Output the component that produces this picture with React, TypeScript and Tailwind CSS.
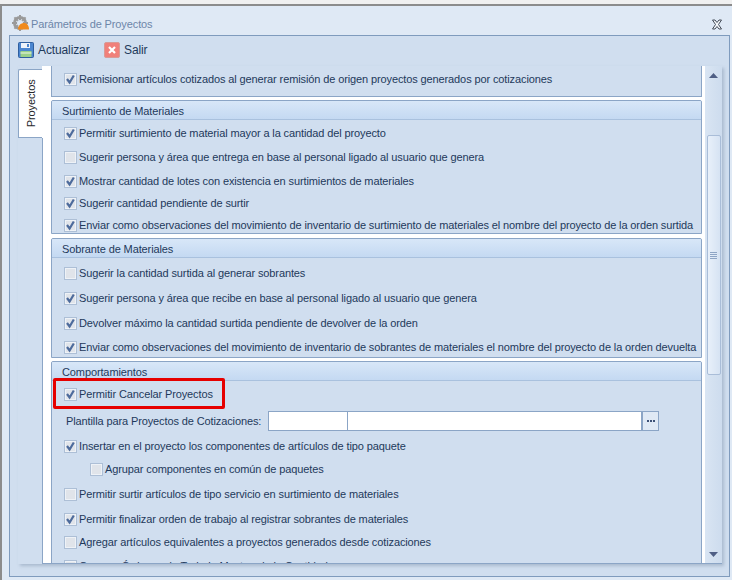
import React from 'react';

const font = { fontFamily: '"Liberation Sans", sans-serif' };

const Check = ({ on, indent }: { on?: boolean; indent?: boolean }) => (
  <span className={`flex h-[13px] w-[13px] shrink-0 items-center justify-center border border-[#adbfd6] bg-[#e0e4ea] shadow-[inset_0_0_0_1px_#eef2f7] ${indent ? 'ml-[26px]' : ''}`}>
    {on && (
      <svg width="11" height="11" viewBox="0 0 11 11">
        <path d="M2 5 L4.6 8.5 L8.8 1.5" fill="none" stroke="#4d6b9c" strokeWidth="2.2" />
      </svg>
    )}
  </span>
);

const Row = ({ text, on, h, indent }: { text: string; on?: boolean; h: string; indent?: boolean }) => (
  <div className={`flex shrink-0 items-center gap-[2px] whitespace-nowrap pl-[12px] ${h}`}>
    <Check on={on} indent={indent} />
    <span>{text}</span>
  </div>
);

const Group = ({ title, h, children }: { title: string; h: string; children: React.ReactNode }) => (
  <div className={`flex shrink-0 flex-col overflow-hidden rounded-t-[2px] border border-[#8ba5c6] bg-[#d0deef] ${h}`}>
    <div className="flex h-[19px] shrink-0 items-center border-b border-[#a9c1de] bg-gradient-to-b from-[#d8e7f8] to-[#c4d9f2] pl-[10px] pt-[2px]">
      {title}
    </div>
    {children}
  </div>
);

const GearIcon = () => (
  <svg width="18" height="18" viewBox="0 0 18 18">
    <circle cx="8" cy="8" r="5.5" fill="none" stroke="#9a9a9a" strokeWidth="3" />
    <path d="M8 0v16M0 8h16M2.4 2.4l11.2 11.2M13.6 2.4L2.4 13.6" stroke="#9a9a9a" strokeWidth="2" />
    <circle cx="8" cy="8" r="3" fill="#dfe9f5" />
    <path d="M6 14.5 C6 10 9.5 8 12 8 C15 8 17 10.5 17 14.5 Z" fill="#f08a1c" />
  </svg>
);

const SaveIcon = () => (
  <svg width="16" height="16" viewBox="0 0 16 16">
    <rect x="0.5" y="0.5" width="15" height="15" rx="1" fill="#4b86d0" stroke="#2f5f9f" />
    <rect x="3" y="1" width="9" height="5" fill="#eef3fa" />
    <rect x="9" y="2" width="2" height="3" fill="#4b86d0" />
    <rect x="2.5" y="9" width="11" height="6" fill="#9bd08a" />
    <rect x="2.5" y="10.5" width="11" height="1" fill="#eef7e8" />
  </svg>
);

const ExitIcon = () => (
  <svg width="16" height="16" viewBox="0 0 16 16">
    <rect x="0.5" y="0.5" width="15" height="15" rx="1.5" fill="#f0807a" stroke="#d99a96" />
    <path d="M5 5l6 6M11 5l-6 6" stroke="#ffffff" strokeWidth="2.2" />
  </svg>
);

export default function App() {
  return (
    <div className="relative h-[580px] w-[732px] overflow-hidden bg-[#f0f0f0] pt-[4px] text-[11px] tracking-[-0.115px] text-[#1e395b]" style={font}>
      <div className="flex h-[576px] flex-col border-l-2 border-t-2 border-[#8c8c8c] bg-[#dfe9f5]">
        {/* title bar */}
        <div className="flex h-[29px] shrink-0 items-center pl-[10px] pr-[9px] pt-[7px]">
          <GearIcon />
          <span className="ml-[1px] text-[#6d86a9]">Parámetros de Proyectos</span>
          <svg className="ml-auto" width="12" height="11" viewBox="0 0 12 11">
            <path d="M1.5 1h2.5l2 2.5 2-2.5h2.5l-3 4.5 3 4.5h-2.5l-2-2.5-2 2.5h-2.5l3-4.5z" fill="#f5f7fa" stroke="#444c58" />
          </svg>
        </div>

        {/* main panel */}
        <div className="ml-[7px] mr-[2px] flex h-[542px] flex-col border border-[#7f9bbd] bg-[#d0deef]">
          <div className="flex h-[30px] shrink-0 items-center pb-[3px] pl-[8px] text-[12px]">
            <SaveIcon />
            <span className="ml-[4px] w-[52px]">Actualizar</span>
            <span className="ml-[14px]"><ExitIcon /></span>
            <span className="ml-[4px]">Salir</span>
          </div>

          <div className="ml-[8px] flex h-[498px] w-[704px] shrink-0 shadow-[2px_2px_3px_rgba(100,120,150,0.35)]">
            <div className="mt-[3px] flex h-[69px] w-[24px] shrink-0 items-center justify-center rounded-tl-[2px] border-y border-l border-[#8ba5c6] bg-white">
              <span className="-rotate-90 whitespace-nowrap text-[#26282c]">Proyectos</span>
            </div>

            <div className="flex min-w-0 flex-1 border-b border-r border-[#8ba5c6] bg-white">
              <div className="flex flex-1">
                <div className="mt-[72px] w-[1px] bg-[#8ba5c6]" />
                <div className="ml-[8px] flex h-[497px] w-[651px] flex-col overflow-hidden">
                  <div className="flex h-[31px] shrink-0 items-start border-x border-b border-[#8ba5c6] bg-[#d0deef]">
                    <Row on h="h-[26px]" text="Remisionar artículos cotizados al generar remisión de origen proyectos generados por cotizaciones" />
                  </div>
                  <div className="mt-[3px] flex flex-col">
                    <Group title="Surtimiento de Materiales" h="h-[134px]">
                      <Row on h="h-[26px]" text="Permitir surtimiento de material mayor a la cantidad del proyecto" />
                      <Row h="h-[23px]" text="Sugerir persona y área que entrega en base al personal ligado al usuario que genera" />
                      <Row on h="h-[24px]" text="Mostrar cantidad de lotes con existencia en surtimientos de materiales" />
                      <Row on h="h-[21px]" text="Sugerir cantidad pendiente de surtir" />
                      <Row on h="h-[22px]" text="Enviar como observaciones del movimiento de inventario de surtimiento de materiales el nombre del proyecto de la orden surtida" />
                    </Group>
                    <div className="mt-[4px]">
                      <Group title="Sobrante de Materiales" h="h-[120px]">
                        <Row h="mt-[3px] h-[25px]" text="Sugerir la cantidad surtida al generar sobrantes" />
                        <Row on h="h-[25px]" text="Sugerir persona y área que recibe en base al personal ligado al usuario que genera" />
                        <Row on h="h-[25px]" text="Devolver máximo la cantidad surtida pendiente de devolver de la orden" />
                        <Row on h="h-[22px]" text="Enviar como observaciones del movimiento de inventario de sobrantes de materiales el nombre del proyecto de la orden devuelta" />
                      </Group>
                    </div>
                    <div className="mt-[3px]">
                      <Group title="Comportamientos" h="h-[225px]">
                        <div className="relative shrink-0">
                          <Row on h="h-[26px]" text="Permitir Cancelar Proyectos" />
                          <div className="absolute left-[1px] top-[-3px] h-[31px] w-[172px] rounded-[2px] border-[3px] border-[#e60000]" />
                        </div>
                        <div className="mt-[3px] flex h-[22px] shrink-0 items-center whitespace-nowrap pl-[14px]">
                          <span className="w-[202px]">Plantilla para Proyectos de Cotizaciones:</span>
                          <span className="h-[20px] w-[80px] border border-[#8ba5c6] bg-white" />
                          <span className="-ml-[1px] h-[20px] w-[295px] border border-[#8ba5c6] bg-white" />
                          <span className="flex h-[20px] w-[17px] items-center justify-center gap-[1px] border border-[#8ba5c6] bg-[#dfe9f5]">
                            <span className="h-[2px] w-[2px] bg-[#3d5277]" />
                            <span className="h-[2px] w-[2px] bg-[#3d5277]" />
                            <span className="h-[2px] w-[2px] bg-[#3d5277]" />
                          </span>
                        </div>
                        <Row on h="h-[28px]" text="Insertar en el proyecto los componentes de artículos de tipo paquete" />
                        <Row indent h="-mt-[1px] mb-[1px] h-[20px]" text="Agrupar componentes en común de paquetes" />
                        <Row h="h-[28px]" text="Permitir surtir artículos de tipo servicio en surtimiento de materiales" />
                        <Row on h="h-[23px]" text="Permitir finalizar orden de trabajo al registrar sobrantes de materiales" />
                        <Row h="h-[23px]" text="Agregar artículos equivalentes a proyectos generados desde cotizaciones" />
                        <Row h="h-[24px]" text="Generar Órdenes de Trabajo Mostrando la Cantidad" />
                      </Group>
                    </div>
                  </div>
                </div>
              </div>

              {/* scrollbar */}
              <div className="ml-[3px] flex h-[497px] w-[17px] shrink-0 flex-col items-center bg-gradient-to-r from-[#d9e5f3] to-[#cddcee]">
                <svg className="mt-[7px]" width="9" height="5" viewBox="0 0 9 5"><path d="M4.5 0L9 5H0z" fill="#4f5f85" /></svg>
                <div className="mt-[57px] flex h-[240px] w-[14px] items-center justify-center rounded-[2px] border border-[#a9bdd8] bg-gradient-to-r from-[#e8f0fa] to-[#d6e3f3]">
                  <div className="flex w-[7px] flex-col gap-[1px]">
                    <span className="h-[1px] bg-[#8ea5c5]" />
                    <span className="h-[1px] bg-[#8ea5c5]" />
                    <span className="h-[1px] bg-[#8ea5c5]" />
                    <span className="h-[1px] bg-[#8ea5c5]" />
                  </div>
                </div>
                <svg className="mt-auto mb-[6px]" width="9" height="5" viewBox="0 0 9 5"><path d="M0 0H9L4.5 5z" fill="#4f5f85" /></svg>
              </div>
            </div>
          </div>
        </div>
      </div>
    </div>
  );
}
